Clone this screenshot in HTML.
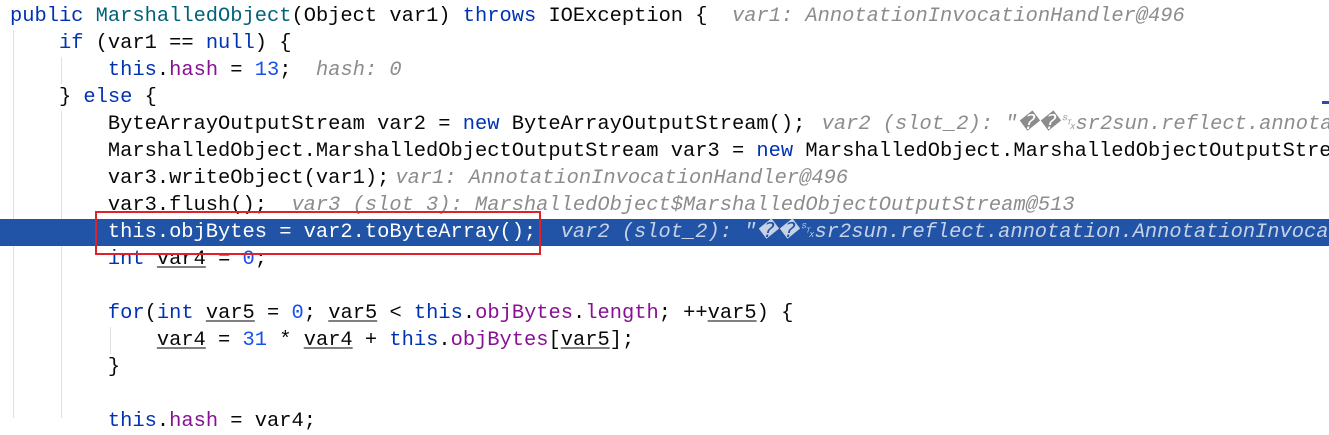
<!DOCTYPE html><html><head><style>
body{margin:0;width:1329px;height:418px;overflow:hidden;background:#fff;position:relative;font-family:"Liberation Mono",monospace;font-size:20.4px;}
.l{position:absolute;left:10px;height:27px;line-height:27px;white-space:pre;color:#080808;}
.k{color:#0033b3}.f{color:#871094}.n{color:#1750eb}.m{color:#00627a}
.h{color:#8c8c8c;font-style:italic}
.u{text-decoration:underline;text-decoration-color:#808080}
.sel{position:absolute;left:0;top:219px;width:1329px;height:27px;background:#2154a6}
.g{position:absolute;width:1px;background:#e0e0e0}
</style></head><body>
<div class="g" style="left:13px;top:30px;height:388px"></div>
<div class="g" style="left:61px;top:57px;height:27px"></div>
<div class="g" style="left:61px;top:111px;height:307px"></div>
<div class="g" style="left:110px;top:327px;height:27px"></div>
<div class="sel"></div>
<div style="position:absolute;left:1322px;top:101px;width:7px;height:3px;background:#2154a6"></div>
<div class="l" style="top:3px"><span class="k">public</span> <span class="m">MarshalledObject</span>(Object var1) <span class="k">throws</span> IOException {  <span class="h">var1: AnnotationInvocationHandler@496</span></div>
<div class="l" style="top:30px">    <span class="k">if</span> (var1 == <span class="k">null</span>) {</div>
<div class="l" style="top:57px">        <span class="k">this</span>.<span class="f">hash</span> = <span class="n">13</span>;  <span class="h">hash: 0</span></div>
<div class="l" style="top:84px">    } <span class="k">else</span> {</div>
<div class="l" style="top:111px">        ByteArrayOutputStream var2 = <span class="k">new</span> ByteArrayOutputStream(); <span class="h" style="margin-left:4px">var2 (slot_2): "��␂sr2sun.reflect.annotation</span></div>
<div class="l" style="top:138px">        MarshalledObject.MarshalledObjectOutputStream var3 = <span class="k">new</span> MarshalledObject.MarshalledObjectOutputStream</div>
<div class="l" style="top:165px">        var3.writeObject(var1);<span class="h" style="margin-left:6px">var1: AnnotationInvocationHandler@496</span></div>
<div class="l" style="top:192px">        var3.flush();  <span class="h">var3 (slot_3): MarshalledObject$MarshalledObjectOutputStream@513</span></div>
<div class="l" style="top:219px;color:#fff">        this.objBytes = var2.toByteArray();  <span class="h" style="color:#c8d2e6">var2 (slot_2): "��␂sr2sun.reflect.annotation.AnnotationInvocation</span></div>
<div class="l" style="top:246px">        <span class="k">int</span> <span class="u">var4</span> = <span class="n">0</span>;</div>
<div class="l" style="top:300px">        <span class="k">for</span>(<span class="k">int</span> <span class="u">var5</span> = <span class="n">0</span>; <span class="u">var5</span> &lt; <span class="k">this</span>.<span class="f">objBytes</span>.<span class="f">length</span>; ++<span class="u">var5</span>) {</div>
<div class="l" style="top:327px">            <span class="u">var4</span> = <span class="n">31</span> * <span class="u">var4</span> + <span class="k">this</span>.<span class="f">objBytes</span>[<span class="u">var5</span>];</div>
<div class="l" style="top:354px">        }</div>
<div class="l" style="top:408px">        <span class="k">this</span>.<span class="f">hash</span> = var4;</div>
<div style="position:absolute;left:95px;top:211px;width:442px;height:40px;border:2px solid #e0202a"></div>
</body></html>
